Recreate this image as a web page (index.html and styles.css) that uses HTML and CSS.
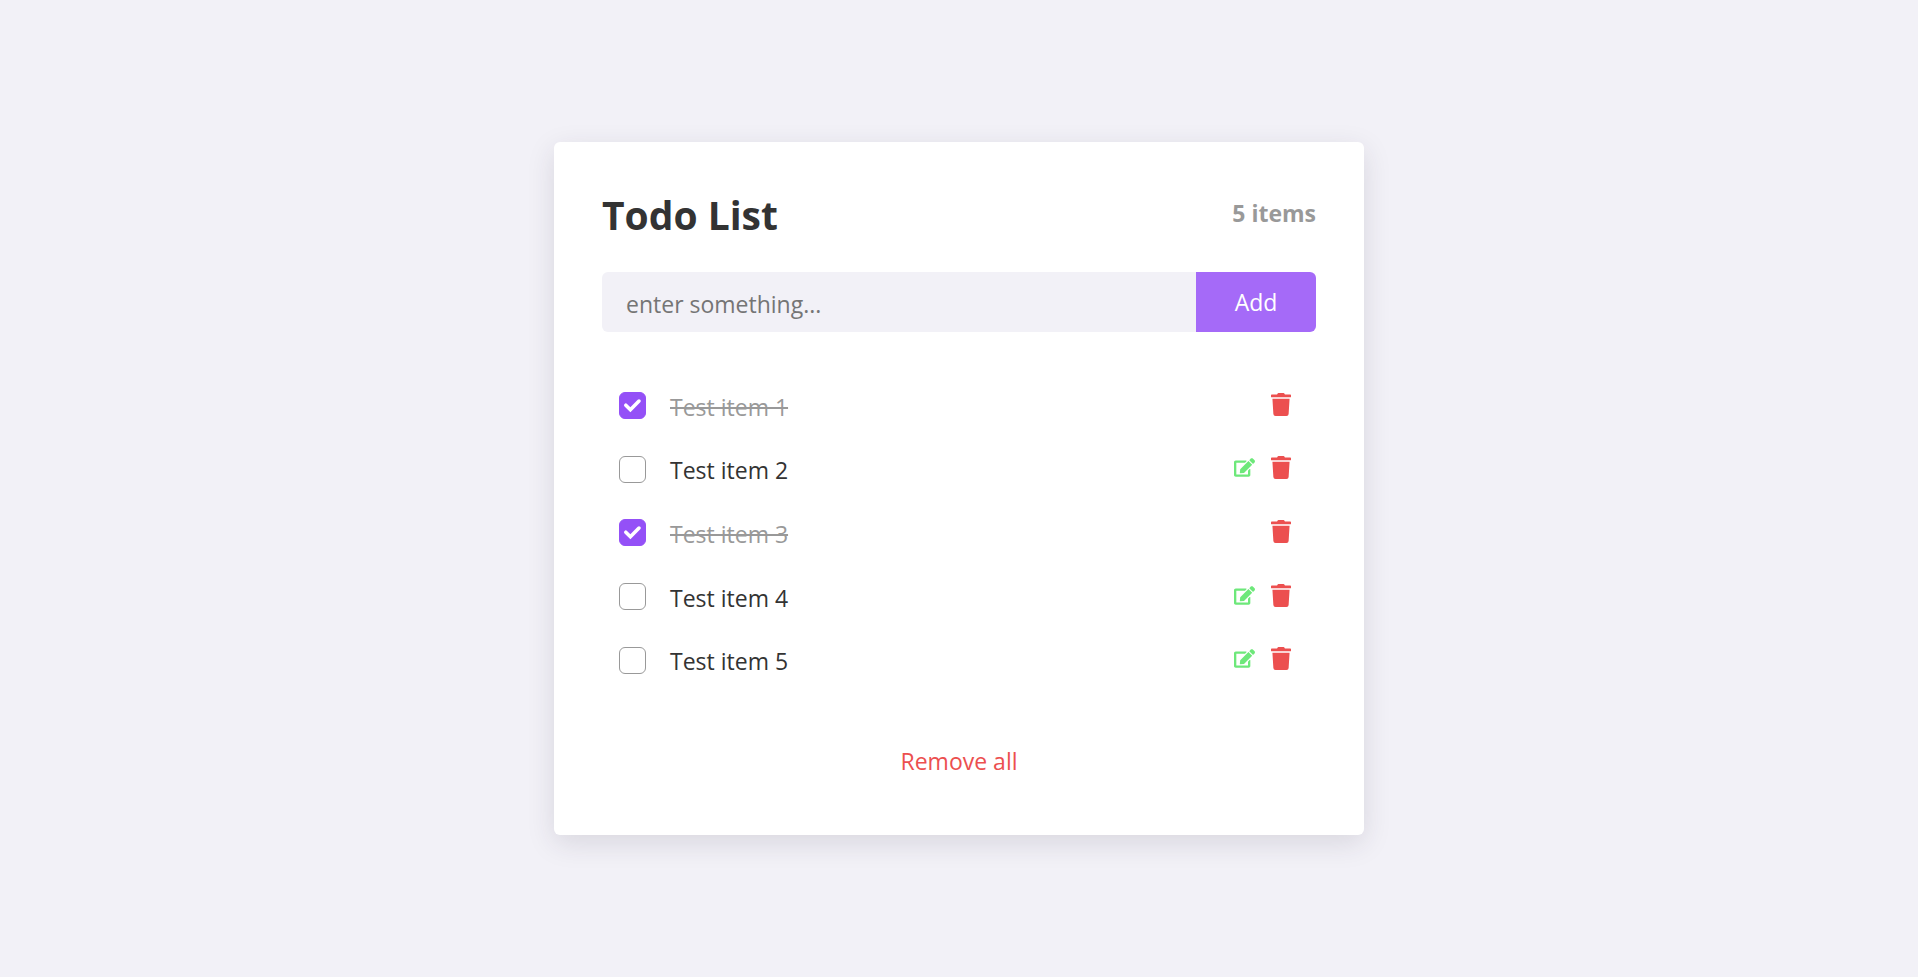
FILE: index.html
```html
<!DOCTYPE html>
<html lang="en">
<head>
<meta charset="utf-8">
<meta name="viewport" content="width=device-width, initial-scale=1">
<title>Todo List</title>
<link rel="stylesheet" href="styles.css">
</head>
<body>
<svg class="sprite" aria-hidden="true">
  <symbol id="icon-edit" viewBox="0 0 576 512"><path d="M402.6 83.2l90.2 90.2c3.8 3.8 3.8 10 0 13.8L274.4 405.6l-92.8 10.3c-12.4 1.4-22.9-9.1-21.5-21.5l10.3-92.8L388.8 83.2c3.8-3.8 10-3.8 13.8 0zm162-22.9l-48.8-48.8c-15.2-15.2-39.9-15.2-55.2 0l-35.4 35.4c-3.8 3.8-3.8 10 0 13.8l90.2 90.2c3.8 3.8 10 3.8 13.8 0l35.4-35.4c15.2-15.3 15.2-40 0-55.2zM384 346.2V448H64V128h229.8c3.2 0 6.2-1.3 8.5-3.5l40-40c7.6-7.6 2.2-20.5-8.5-20.5H48C21.5 64 0 85.5 0 112v352c0 26.5 21.5 48 48 48h352c26.5 0 48-21.5 48-48V306.2c0-10.7-12.9-16-20.5-8.5l-40 40c-2.2 2.3-3.5 5.3-3.5 8.5z"/></symbol>
  <symbol id="icon-trash" viewBox="0 0 448 512"><path d="M432 32H312l-9.4-18.7A24 24 0 0 0 281.1 0H166.8a23.72 23.72 0 0 0-21.4 13.3L136 32H16A16 16 0 0 0 0 48v32a16 16 0 0 0 16 16h416a16 16 0 0 0 16-16V48a16 16 0 0 0-16-16zM53.2 467a48 48 0 0 0 47.9 45h245.8a48 48 0 0 0 47.9-45L416 128H32z"/></symbol>
  <symbol id="icon-check" viewBox="0 0 27 27"><path d="M6.8 13.2l4.6 4.5 8.6-8.6" fill="none" stroke="currentColor" stroke-width="3.6" stroke-linecap="round"/></symbol>
</svg>
<main class="card">
  <header class="header">
    <h1 class="title">Todo List</h1>
    <p class="count">5 items</p>
  </header>
  <form class="add-form">
    <input class="add-input" type="text" placeholder="enter something..." aria-label="New item">
    <button class="add-button" type="button">Add</button>
  </form>
  <ul class="list">
    <li class="item">
      <span class="check"><input class="box" id="item-1" type="checkbox" checked><svg class="tick"><use href="#icon-check"/></svg></span>
      <label class="label done" for="item-1">Test item 1</label>
      <button class="action delete" type="button" aria-label="Delete"><svg class="trash-icon"><use href="#icon-trash"/></svg></button>
    </li>
    <li class="item">
      <span class="check"><input class="box" id="item-2" type="checkbox"></span>
      <label class="label" for="item-2">Test item 2</label>
      <button class="action edit" type="button" aria-label="Edit"><svg class="edit-icon"><use href="#icon-edit"/></svg></button>
      <button class="action delete" type="button" aria-label="Delete"><svg class="trash-icon"><use href="#icon-trash"/></svg></button>
    </li>
    <li class="item">
      <span class="check"><input class="box" id="item-3" type="checkbox" checked><svg class="tick"><use href="#icon-check"/></svg></span>
      <label class="label done" for="item-3">Test item 3</label>
      <button class="action delete" type="button" aria-label="Delete"><svg class="trash-icon"><use href="#icon-trash"/></svg></button>
    </li>
    <li class="item">
      <span class="check"><input class="box" id="item-4" type="checkbox"></span>
      <label class="label" for="item-4">Test item 4</label>
      <button class="action edit" type="button" aria-label="Edit"><svg class="edit-icon"><use href="#icon-edit"/></svg></button>
      <button class="action delete" type="button" aria-label="Delete"><svg class="trash-icon"><use href="#icon-trash"/></svg></button>
    </li>
    <li class="item">
      <span class="check"><input class="box" id="item-5" type="checkbox"></span>
      <label class="label" for="item-5">Test item 5</label>
      <button class="action edit" type="button" aria-label="Edit"><svg class="edit-icon"><use href="#icon-edit"/></svg></button>
      <button class="action delete" type="button" aria-label="Delete"><svg class="trash-icon"><use href="#icon-trash"/></svg></button>
    </li>
  </ul>
  <button class="remove-all" type="button">Remove all</button>
</main>
</body>
</html>
```
FILE: styles.css
```css
* {
  box-sizing: border-box;
}

body {
  margin: 0;
  min-height: 100vh;
  display: flex;
  align-items: center;
  justify-content: center;
  background: #f2f1f7;
  color: #333;
  font-family: "Segoe UI", "Open Sans", "Noto Sans", sans-serif;
  font-size: 23px;
  line-height: 32px;
}

button,
input {
  font: inherit;
}

button {
  border: 0;
  padding: 0;
  background: none;
  cursor: pointer;
}

.sprite {
  display: none;
}

.card {
  width: 100%;
  max-width: 810px;
  padding: 48px;
  display: flex;
  flex-direction: column;
  background: #fff;
  border-radius: 6px;
  box-shadow: 0 8px 28px rgba(50, 40, 60, 0.13);
}

.header {
  display: flex;
  align-items: center;
  justify-content: space-between;
  margin-bottom: 32px;
}

.title {
  margin: 0;
  font-size: 39px;
  line-height: 50px;
}

.count {
  margin: 0;
  padding-bottom: 4px;
  color: #999;
  font-weight: 700;
}

.add-form {
  display: flex;
  height: 60px;
  border-radius: 6px;
  overflow: hidden;
}

.add-input {
  flex: 1;
  min-width: 0;
  padding: 4px 24px 0;
  border: 0;
  outline: 0;
  background: #f2f1f7;
  color: #333;
}

.add-input::placeholder {
  color: #757575;
}

.add-button {
  width: 120px;
  background: #a56af8;
  color: #fff;
}

.list {
  display: grid;
  grid-auto-rows: 1fr;
  min-height: 318px;
  margin: 42px 0 40px;
  padding: 0 25px 0 17px;
  list-style: none;
}

.item {
  display: flex;
  align-items: center;
}

.check {
  position: relative;
  display: flex;
  margin-right: 24px;
}

.box {
  appearance: none;
  width: 27px;
  height: 27px;
  margin: 0;
  border: 1px solid #999;
  border-radius: 6px;
  background: #fff;
}

.box:checked {
  border-color: #9450f7;
  background: #9450f7;
}

.tick {
  position: absolute;
  inset: 0;
  width: 27px;
  height: 27px;
  color: #fff;
  pointer-events: none;
}

.label {
  flex: 1;
  padding-top: 2px;
}

.done {
  color: #999;
  text-decoration: line-through;
}

.action {
  display: flex;
  padding-bottom: 3px;
}

.edit {
  margin-right: 16px;
  color: #6de87a;
}

.delete {
  color: #ec4f4f;
}

.action svg {
  fill: currentColor;
}

.edit-icon {
  width: 21px;
  height: 19px;
}

.trash-icon {
  width: 20px;
  height: 23px;
}

.remove-all {
  align-self: center;
  height: 55px;
  padding-top: 2px;
  color: #ec4f4f;
}
```
